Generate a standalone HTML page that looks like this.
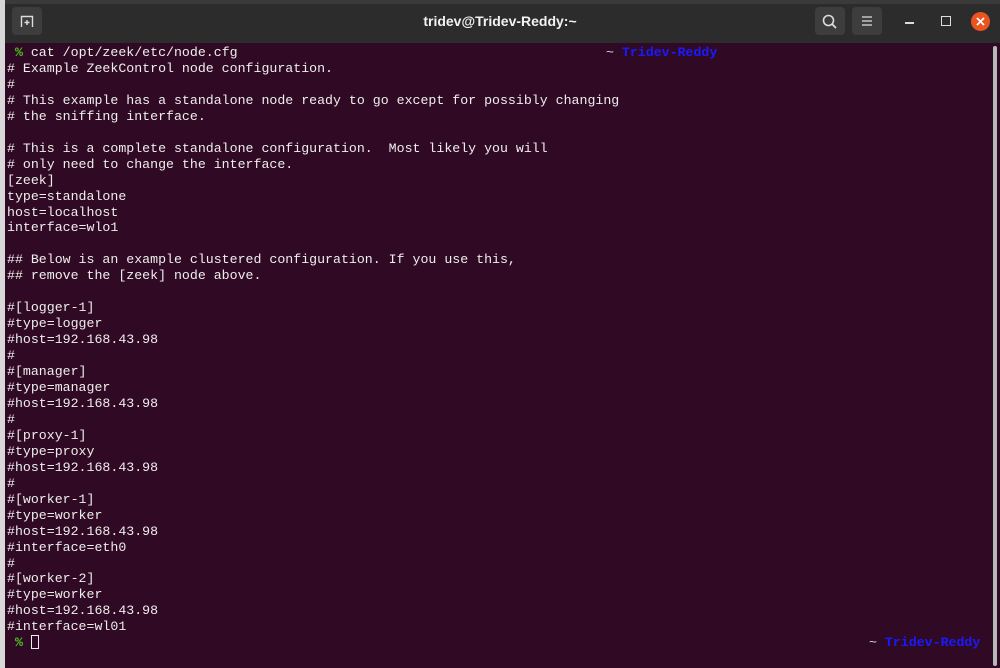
<!DOCTYPE html>
<html><head><meta charset="utf-8"><style>
html,body{margin:0;padding:0;width:1000px;height:668px;overflow:hidden;background:#300a24}
.strip{position:absolute;left:0;top:0;width:5px;height:668px;background:#d8d8d8}
.top{position:absolute;left:0;top:0;width:1000px;height:4px;background:#3a3a3a}
.bar{position:absolute;left:5px;top:4px;width:995px;height:39px;background:#2c2c2c}
.btn{position:absolute;background:#3d3d3d;border-radius:4px}
.title{position:absolute;left:0;width:1000px;top:13px;text-align:center;color:#f2f2f2;font:bold 14px "Liberation Sans",sans-serif}
.term{position:absolute;left:5px;top:43px;width:995px;height:625px;background:#300a24}
pre,.r{font:13.25px/15.95px "Liberation Mono",monospace;color:#eeeeec;white-space:pre}
pre{position:absolute;left:7px;top:45px;margin:0}
.r{position:absolute}
.g{color:#4cc21d;font-weight:bold}.b{color:#1a1aff;font-weight:bold}
.sb{position:absolute;left:993px;top:46px;width:4px;height:620px;background:#b8b8b8;border-radius:2px}
.cur{display:inline-block;width:8px;height:14px;border:1px solid #eee;vertical-align:-3px;box-sizing:border-box}
</style></head><body>
<div class="top"></div>
<div class="bar"></div>
<div class="strip"></div>
<div class="btn" style="left:12px;top:7px;width:30px;height:28px"></div>
<svg style="position:absolute;left:19px;top:14px" width="16" height="14" viewBox="0 0 16 14"><path d="M2.5 13V2.5h11V13M8 6v5M5.5 8.5h5" stroke="#ddd" stroke-width="1.4" fill="none"/></svg>
<div class="title">tridev@Tridev-Reddy:~</div>
<div class="btn" style="left:815px;top:7px;width:30px;height:28px"></div>
<svg style="position:absolute;left:821px;top:13px" width="18" height="18" viewBox="0 0 18 18"><circle cx="7.5" cy="7.5" r="5" stroke="#ddd" stroke-width="1.6" fill="none"/><path d="M11 11l4 4" stroke="#ddd" stroke-width="1.8"/></svg>
<div class="btn" style="left:852px;top:7px;width:30px;height:28px"></div>
<svg style="position:absolute;left:861px;top:15px" width="12" height="12" viewBox="0 0 12 12"><path d="M1 2h10M1 6h10M1 10h10" stroke="#ddd" stroke-width="1.3"/></svg>
<div style="position:absolute;left:905px;top:22px;width:9px;height:2px;background:#ddd"></div>
<div style="position:absolute;left:941px;top:16px;width:8px;height:8px;border:1.5px solid #ddd"></div>
<div style="position:absolute;left:971px;top:12px;width:19px;height:19px;border-radius:50%;background:#e95420"></div>
<svg style="position:absolute;left:976px;top:17px" width="9" height="9" viewBox="0 0 9 9"><path d="M1 1l7 7M8 1l-7 7" stroke="#fff" stroke-width="1.8"/></svg>
<div class="term"></div>
<div class="sb"></div>
<pre> <span class="g">%</span> cat /opt/zeek/etc/node.cfg
# Example ZeekControl node configuration.
#
# This example has a standalone node ready to go except for possibly changing
# the sniffing interface.

# This is a complete standalone configuration.  Most likely you will
# only need to change the interface.
[zeek]
type=standalone
host=localhost
interface=wlo1

## Below is an example clustered configuration. If you use this,
## remove the [zeek] node above.

#[logger-1]
#type=logger
#host=192.168.43.98
#
#[manager]
#type=manager
#host=192.168.43.98
#
#[proxy-1]
#type=proxy
#host=192.168.43.98
#
#[worker-1]
#type=worker
#host=192.168.43.98
#interface=eth0
#
#[worker-2]
#type=worker
#host=192.168.43.98
#interface=wl01
 <span class="g">%</span> <span class="cur"></span></pre>
<div class="r" style="left:606px;top:45px"><span style="color:#ddd">~</span> <span class="b">Tridev-Reddy</span></div>
<div class="r" style="left:869px;top:635px"><span style="color:#ddd">~</span> <span class="b">Tridev-Reddy</span></div>
</body></html>
